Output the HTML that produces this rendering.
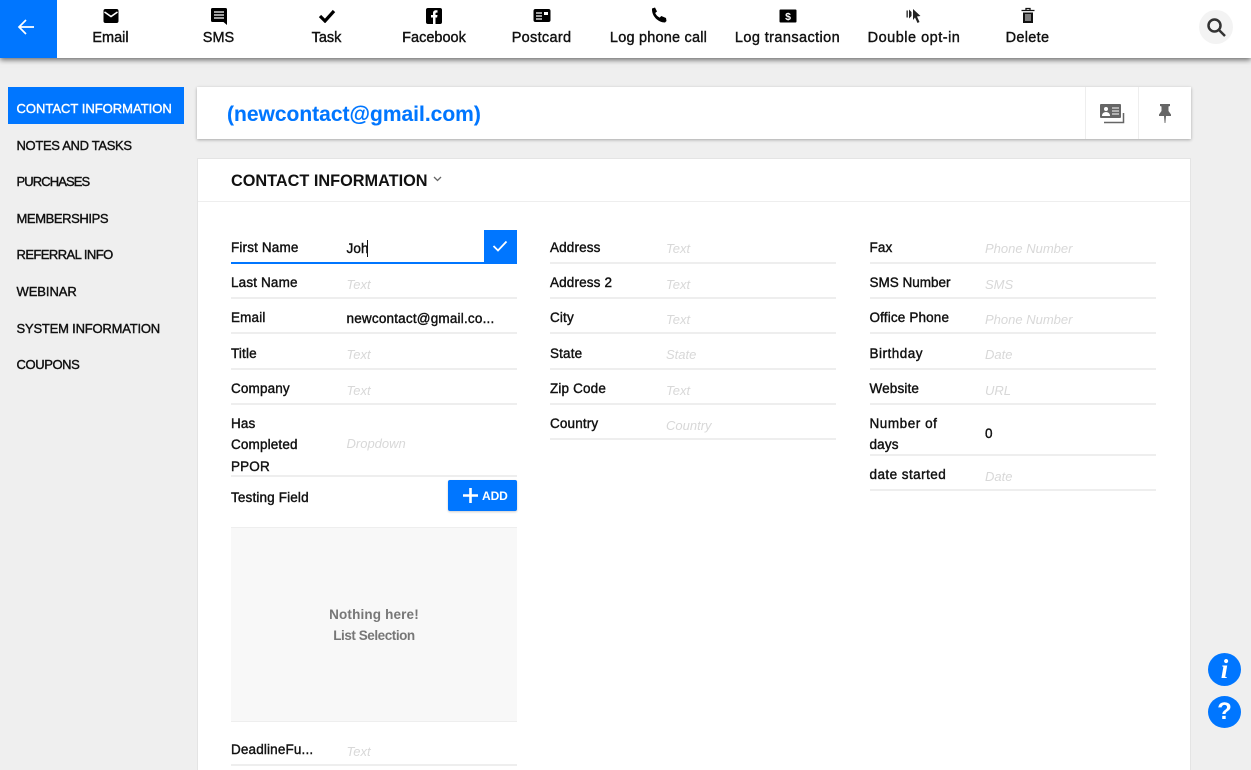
<!DOCTYPE html>
<html><head><meta charset="utf-8"><style>
*{box-sizing:border-box}
html,body{margin:0;padding:0;width:1251px;height:770px;overflow:hidden}
body{background:#efefef;position:relative;font-family:"Liberation Sans",sans-serif;color:#111;font-size:13.5px;-webkit-text-stroke:.4px currentColor}
.a{position:absolute;white-space:nowrap;line-height:18px}
.top{position:absolute;left:0;top:0;width:1251px;height:58px;background:#fff;box-shadow:0 2px 5px rgba(0,0,0,.55)}
.t{position:absolute;top:29px;line-height:18px;text-align:center;font-size:14.5px;white-space:nowrap;transform:translateX(-50%)}
.i{position:absolute;transform:translateX(-50%)}
.n{position:absolute;left:16.5px;font-size:13px;line-height:18px;white-space:nowrap}
.l{position:absolute;font-size:13.5px;line-height:18px;white-space:nowrap;letter-spacing:.15px}
.p{position:absolute;font-size:13px;line-height:18px;font-style:italic;color:#d8d8d8;white-space:nowrap;-webkit-text-stroke:0}
.b{position:absolute;height:2px;background:#eee}
</style></head><body>
<div class="top"></div>
<div class="a" style="left:0;top:0;width:57px;height:58px;background:#0076ff"></div>
<svg class="a" style="left:17px;top:17px" width="19" height="19" viewBox="0 0 19 19" fill="none" stroke="#fff" stroke-width="1.7"><path d="M17 10H2M9 3L2 10l7 7"/></svg>

<svg class="i" style="left:110.5px;top:8px" width="16" height="16" viewBox="0 0 16 16"><rect x="0.5" y="1" width="15" height="14" rx="2" fill="#000"/><path d="M1.5 4l6.5 4.5L14.500 4" fill="none" stroke="#fff" stroke-width="1.6"/></svg>
<div class="t" style="left:110.500px">Email</div>
<svg class="i" style="left:218.500px;top:8px" width="17" height="17" viewBox="0 0 17 17"><path d="M2 0h13a1.500 1.500 0 0 1 1.500 1.500V17l-3.500-3H2a1.500 1.500 0 0 1-1.500-1.500v-11A1.500 1.500 0 0 1 2 0z" fill="#000"/><path d="M3.500 4h10M3.500 7h10M3.500 10h10" stroke="#fff" stroke-width="1.300"/></svg>
<div class="t" style="left:218.500px">SMS</div>
<svg class="i" style="left:326.500px;top:9px" width="17" height="14" viewBox="0 0 17 14"><path d="M1.500 7l5 5L15.500 2" fill="none" stroke="#000" stroke-width="3.200"/></svg>
<div class="t" style="left:326.500px">Task</div>
<svg class="i" style="left:434px;top:8px" width="16" height="16" viewBox="0 0 16 16"><rect width="16" height="16" rx="2" fill="#000"/><path d="M7 16V9.500H5V7h2V5.200C7 3.200 8.200 2.200 10 2.200h1.500v2.400h-1c-.7 0-1 .3-1 1V7h2l-.4 2.500H9.500V16z" fill="#fff"/></svg>
<div class="t" style="left:434px">Facebook</div>
<svg class="i" style="left:541.500px;top:9px" width="17" height="14" viewBox="0 0 17 14"><rect width="17" height="13" rx="2" fill="#000"/><path d="M2.500 4h6M2.500 7h6M2.500 10h6" stroke="#fff" stroke-width="1.200"/><rect x="10.500" y="3" width="4" height="3" fill="#fff"/></svg>
<div class="t" style="left:541.500px;letter-spacing:.3px">Postcard</div>
<svg class="i" style="left:658.500px;top:7px" width="16" height="16" viewBox="0 0 16 16"><path d="M1 1.500L4 .5l2 4-1.800 1.500c.8 2 2.500 3.700 4.500 4.600L10.300 9l4.700 2 .500 3-1.500 1.500C7 15.500.5 9 1 1.500z" fill="#000"/></svg>
<div class="t" style="left:658.500px;letter-spacing:.2px">Log phone call</div>
<svg class="i" style="left:787.500px;top:9px" width="17" height="14" viewBox="0 0 17 14"><rect width="17" height="13" y=".500" rx="1" fill="#000"/><text x="8.500" y="11" font-size="10.500" font-weight="700" text-anchor="middle" fill="#fff" style="-webkit-text-stroke:0">$</text></svg>
<div class="t" style="left:787.500px;letter-spacing:.4px">Log transaction</div>
<svg class="i" style="left:914px;top:8px" width="15" height="16" viewBox="0 0 15 16"><path d="M6.500 1l7.500 7-3.500.5L13 14l-2 1-2.500-5.500L6.500 12z" fill="#222"/><path d="M0 2.500h1.300v7H0zM2.500 1.500L5 4v4L2.500 10.500z" fill="#222"/></svg>
<div class="t" style="left:914px;letter-spacing:.5px">Double opt-in</div>
<svg class="i" style="left:1027.500px;top:7px" width="15" height="17" viewBox="0 0 15 17"><path d="M1 3.500h13M5.500 3V1.500h4V3" stroke="#111" stroke-width="1.300" fill="none"/><path d="M2.500 5.500h10V16h-10z" fill="#111"/><path d="M5.500 7v7M7.500 7v7M9.500 7v7" stroke="#fff" stroke-width=".9"/></svg>
<div class="t" style="left:1027.500px;letter-spacing:.3px">Delete</div>

<div class="a" style="left:1199px;top:10px;width:34px;height:34px;border-radius:50%;background:#f3f3f3"></div>
<svg class="a" style="left:1206px;top:17px" width="21" height="21" viewBox="0 0 21 21" fill="none" stroke="#333" stroke-width="2.500"><circle cx="8.500" cy="8.500" r="6"/><path d="M13 13l6 6"/></svg>

<div class="a" style="left:8px;top:87px;width:176px;height:37px;background:#0076ff"></div>
<div class="n" style="top:100px;color:#fff;letter-spacing:0">CONTACT INFORMATION</div>
<div class="n" style="top:137px;letter-spacing:-.33px">NOTES AND TASKS</div>
<div class="n" style="top:173px;letter-spacing:-.9px">PURCHASES</div>
<div class="n" style="top:210px;letter-spacing:-.4px">MEMBERSHIPS</div>
<div class="n" style="top:246px;letter-spacing:-.57px">REFERRAL INFO</div>
<div class="n" style="top:283px;letter-spacing:-.07px">WEBINAR</div>
<div class="n" style="top:320px;letter-spacing:-.2px">SYSTEM INFORMATION</div>
<div class="n" style="top:356px;letter-spacing:-.4px">COUPONS</div>

<div class="a" style="left:197px;top:87px;width:994px;height:52px;background:#fff;box-shadow:0 1px 3px rgba(0,0,0,.3)"></div>
<div class="a" style="left:227px;top:101px;font-size:21px;line-height:27px;font-weight:700;color:#0076ff;-webkit-text-stroke:.1px #0076ff">(newcontact@gmail.com)</div>
<div class="a" style="left:1085px;top:87px;width:1px;height:52px;background:#eee"></div>
<div class="a" style="left:1138px;top:87px;width:1px;height:52px;background:#eee"></div>
<svg class="a" style="left:1100px;top:104px" width="25" height="20" viewBox="0 0 25 20"><rect width="21" height="14" rx="1" fill="#666"/><circle cx="6" cy="5" r="2" fill="#fff"/><path d="M2.500 11.500c0-4 7-4 7 0zM12 4h7M12 7h7M12 10h7" fill="#fff" stroke="#fff" stroke-width="1"/><path d="M4 18.500h19.500V9" fill="none" stroke="#666" stroke-width="1.500"/></svg>
<svg class="a" style="left:1158px;top:104px" width="14" height="19" viewBox="0 0 14 19"><path d="M2 0h10v2l-1.500.5V7L13 10.500V12H8l-.6 7h-.8L6 12H1v-1.500L3.500 7V2.500L2 2z" fill="#666"/></svg>

<div class="a" style="left:197px;top:158px;width:994px;height:612px;background:#fff;border:1px solid #e4e4e4;border-bottom:0"></div>
<div class="a" style="left:198px;top:201px;width:992px;height:1px;background:#eee"></div>
<div class="a" style="left:231px;top:171px;font-size:16.3px;line-height:20px;font-weight:700;-webkit-text-stroke:0">CONTACT INFORMATION</div>
<svg class="a" style="left:433px;top:176px" width="9" height="6" viewBox="0 0 9 6"><path d="M1 1l3.500 3.500L8 1" fill="none" stroke="#666" stroke-width="1.300"/></svg>

<div class="l" style="left:231px;top:239px">First Name</div>
<div class="l" style="left:346.500px;top:240px">Joh</div>
<div class="a" style="left:367px;top:240px;width:1px;height:17px;background:#111"></div>
<div class="a" style="left:231px;top:262px;width:286px;height:2px;background:#0076ff"></div>
<div class="a" style="left:484px;top:230px;width:33px;height:34px;background:#0076ff"></div>
<svg class="a" style="left:492px;top:240px" width="16" height="12" viewBox="0 0 16 12"><path d="M1.500 6l4.500 4.500L14.500 1.500" fill="none" stroke="#fff" stroke-width="1.800"/></svg>

<div class="l" style="left:231px;top:274px">Last Name</div><div class="p" style="left:346.500px;top:276px">Text</div><div class="b" style="left:231px;top:297px;width:286px"></div>
<div class="l" style="left:231px;top:309px">Email</div><div class="l" style="left:346.500px;top:310px;letter-spacing:.2px">newcontact@gmail.co...</div><div class="b" style="left:231px;top:332px;width:286px"></div>
<div class="l" style="left:231px;top:345px">Title</div><div class="p" style="left:346.500px;top:346px">Text</div><div class="b" style="left:231px;top:368px;width:286px"></div>
<div class="l" style="left:231px;top:380px">Company</div><div class="p" style="left:346.500px;top:382px">Text</div><div class="b" style="left:231px;top:403px;width:286px"></div>
<div class="l" style="left:231px;top:415px">Has</div><div class="l" style="left:231px;top:436px">Completed</div><div class="l" style="left:231px;top:458px">PPOR</div>
<div class="p" style="left:346.500px;top:435px">Dropdown</div><div class="b" style="left:231px;top:475px;width:286px"></div>
<div class="l" style="left:231px;top:489px">Testing Field</div>
<div class="a" style="left:448px;top:480px;width:69px;height:31px;border-radius:2px;background:#0076ff;box-shadow:0 1px 2px rgba(0,0,0,.2)"></div>
<svg class="a" style="left:463px;top:488px" width="15" height="15" viewBox="0 0 15 15"><path d="M7.500 0v15M0 7.500h15" stroke="#fff" stroke-width="2.600"/></svg>
<div class="a" style="left:482px;top:487px;font-size:12px;font-weight:700;color:#fff;-webkit-text-stroke:0;letter-spacing:-.1px">ADD</div>
<div class="a" style="left:231px;top:527px;width:286px;height:195px;background:#f8f8f8;border-top:1px solid #eee;border-bottom:1px solid #eee"></div>
<div class="a" style="left:231px;top:606px;width:286px;text-align:center;font-size:13.500px;color:#777;font-weight:700;-webkit-text-stroke:0;letter-spacing:.15px">Nothing here!</div>
<div class="a" style="left:231px;top:627px;width:286px;text-align:center;font-size:13.500px;color:#777;font-weight:700;-webkit-text-stroke:0;letter-spacing:-.45px">List Selection</div>
<div class="l" style="left:231px;top:741px">DeadlineFu...</div><div class="p" style="left:346.500px;top:743px">Text</div><div class="b" style="left:231px;top:764px;width:286px"></div>

<div class="l" style="left:550px;top:239px">Address</div><div class="p" style="left:666px;top:240px">Text</div><div class="b" style="left:550px;top:262px;width:286px"></div>
<div class="l" style="left:550px;top:274px">Address 2</div><div class="p" style="left:666px;top:276px">Text</div><div class="b" style="left:550px;top:297px;width:286px"></div>
<div class="l" style="left:550px;top:309px">City</div><div class="p" style="left:666px;top:311px">Text</div><div class="b" style="left:550px;top:332px;width:286px"></div>
<div class="l" style="left:550px;top:345px">State</div><div class="p" style="left:666px;top:346px">State</div><div class="b" style="left:550px;top:368px;width:286px"></div>
<div class="l" style="left:550px;top:380px">Zip Code</div><div class="p" style="left:666px;top:382px">Text</div><div class="b" style="left:550px;top:403px;width:286px"></div>
<div class="l" style="left:550px;top:415px">Country</div><div class="p" style="left:666px;top:417px">Country</div><div class="b" style="left:550px;top:438px;width:286px"></div>

<div class="l" style="left:869.500px;top:239px">Fax</div><div class="p" style="left:985px;top:240px">Phone Number</div><div class="b" style="left:869.500px;top:262px;width:286px"></div>
<div class="l" style="left:869.500px;top:274px;letter-spacing:0">SMS Number</div><div class="p" style="left:985px;top:276px">SMS</div><div class="b" style="left:869.500px;top:297px;width:286px"></div>
<div class="l" style="left:869.500px;top:309px">Office Phone</div><div class="p" style="left:985px;top:311px">Phone Number</div><div class="b" style="left:869.500px;top:332px;width:286px"></div>
<div class="l" style="left:869.500px;top:345px;letter-spacing:.5px">Birthday</div><div class="p" style="left:985px;top:346px">Date</div><div class="b" style="left:869.500px;top:368px;width:286px"></div>
<div class="l" style="left:869.500px;top:380px">Website</div><div class="p" style="left:985px;top:382px">URL</div><div class="b" style="left:869.500px;top:403px;width:286px"></div>
<div class="l" style="left:869.500px;top:415px;letter-spacing:.55px">Number of</div><div class="l" style="left:869.500px;top:436px">days</div><div class="l" style="left:985px;top:425px">0</div><div class="b" style="left:869.500px;top:454px;width:286px"></div>
<div class="l" style="left:869.500px;top:466px;letter-spacing:.45px">date started</div><div class="p" style="left:985px;top:468px">Date</div><div class="b" style="left:869.500px;top:489px;width:286px"></div>

<div class="a" style="left:1208px;top:653px;width:33px;height:33px;border-radius:50%;background:#0076ff"></div>
<div class="a" style="left:1208px;top:657px;width:33px;height:25px;line-height:25px;text-align:center;font-family:'Liberation Serif',serif;font-size:27px;font-weight:700;font-style:italic;color:#fff;-webkit-text-stroke:0">i</div>
<div class="a" style="left:1208px;top:696px;width:33px;height:32px;border-radius:50%;background:#0076ff"></div>
<div class="a" style="left:1208px;top:699px;width:33px;height:26px;line-height:26px;text-align:center;font-size:24px;font-weight:700;color:#fff;-webkit-text-stroke:0">?</div>
</body></html>
